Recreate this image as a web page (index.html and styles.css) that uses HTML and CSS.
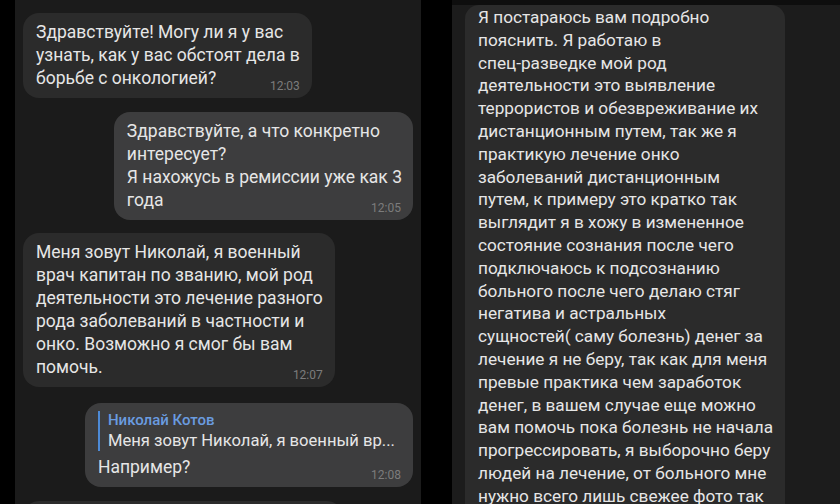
FILE: index.html
```html
<!DOCTYPE html>
<html lang="ru">
<head>
<meta charset="utf-8">
<link rel="stylesheet" href="styles.css">
</head>
<body>
<div class="screen">
  <section class="chat chat-left">
    <div class="msg in b1">
      <p class="text">Здравствуйте! Могу ли я у вас<br>узнать, как у вас обстоят дела в<br>борьбе с онкологией?</p>
      <span class="time">12:03</span>
    </div>
    <div class="msg out b2">
      <p class="text">Здравствуйте, а что конкретно<br>интересует?<br>Я нахожусь в ремиссии уже как 3<br>года</p>
      <span class="time">12:05</span>
    </div>
    <div class="msg in b3">
      <p class="text">Меня зовут Николай, я военный<br>врач капитан по званию, мой род<br>деятельности это лечение разного<br>рода заболеваний в частности и<br>онко. Возможно я смог бы вам<br>помочь.</p>
      <span class="time">12:07</span>
    </div>
    <div class="msg out b4">
      <div class="reply">
        <div class="reply-name">Николай Котов</div>
        <div class="reply-text">Меня зовут Николай, я военный вр...</div>
      </div>
      <p class="text">Например?</p>
      <span class="time">12:08</span>
    </div>
    <div class="msg in b5"></div>
  </section>
  <div class="divider"></div>
  <section class="chat chat-right">
    <div class="top-strip"></div>
    <div class="msg in big">
      <p class="text">Я постараюсь вам подробно<br>пояснить. Я работаю в<br>спец-разведке мой род<br>деятельности это выявление<br>террористов и обезвреживание их<br>дистанционным путем, так же я<br>практикую лечение онко<br>заболеваний дистанционным<br>путем, к примеру это кратко так<br>выглядит я в хожу в измененное<br>состояние сознания после чего<br>подключаюсь к подсознанию<br>больного после чего делаю стяг<br>негатива и астральных<br>сущностей( саму болезнь) денег за<br>лечение я не беру, так как для меня<br>превые практика чем заработок<br>денег, в вашем случае еще можно<br>вам помочь пока болезнь не начала<br>прогрессировать, я выборочно беру<br>людей на лечение, от больного мне<br>нужно всего лишь свежее фото так</p>
    </div>
  </section>
</div>
</body>
</html>
```
FILE: styles.css
```css
* { box-sizing: border-box; }
html, body { margin: 0; padding: 0; background: #000; }
body {
  width: 840px;
  height: 504px;
  overflow: hidden;
  font-family: Roboto, "Noto Sans", "Liberation Sans", sans-serif;
  color: #e6e6e6;
}
.screen {
  display: flex;
  height: 504px;
  padding-left: 15px;
}
.chat {
  display: flex;
  flex-direction: column;
  height: 504px;
  overflow: hidden;
}
.chat-left {
  width: 406px;
  background: #1b1b1b;
  padding: 13px 8px 0;
}
.divider {
  width: 31px;
  background: #000;
}
.chat-right {
  flex: 1;
  background: #1c1c1c;
  padding-left: 13px;
}
.top-strip {
  height: 5px;
  margin-left: -13px;
  background: #0e0e0e;
  flex: none;
}
.msg {
  position: relative;
  flex: none;
  border-radius: 16px;
  padding: 8px 12px 8px 13px;
}
.msg.in { background: #2b2b2b; align-self: flex-start; }
.msg.out { background: #3d3d3e; align-self: flex-end; }
.text {
  margin: 0;
  font-size: 17.5px;
  line-height: 23px;
  white-space: nowrap;
}
.time {
  position: absolute;
  right: 12px;
  bottom: 5px;
  font-size: 12px;
  line-height: 14px;
  color: #7c7c7c;
}
.b2 { margin-top: 14px; padding-right: 11px; }
.b3 { margin-top: 13px; }
.b4 { margin-top: 16px; padding-left: 13px; padding-right: 18px; }
.b5 { margin-top: 14px; height: 40px; width: 320px; }
.reply {
  border-left: 2px solid #4d8ad6;
  padding-left: 8px;
  margin-bottom: 5px;
}
.reply-name {
  font-size: 15px;
  line-height: 19px;
  font-weight: 500;
  color: #6a9ce0;
}
.reply-text {
  font-size: 16.6px;
  line-height: 21px;
  white-space: nowrap;
}
.big {
  width: 320px;
  margin-top: 0;
  padding: 1px 13px 0;
  border-radius: 14px 14px 0 0;
  background: #2c2d2f;
}
.big .text { font-size: 17.2px; line-height: 22.8px; }
```
